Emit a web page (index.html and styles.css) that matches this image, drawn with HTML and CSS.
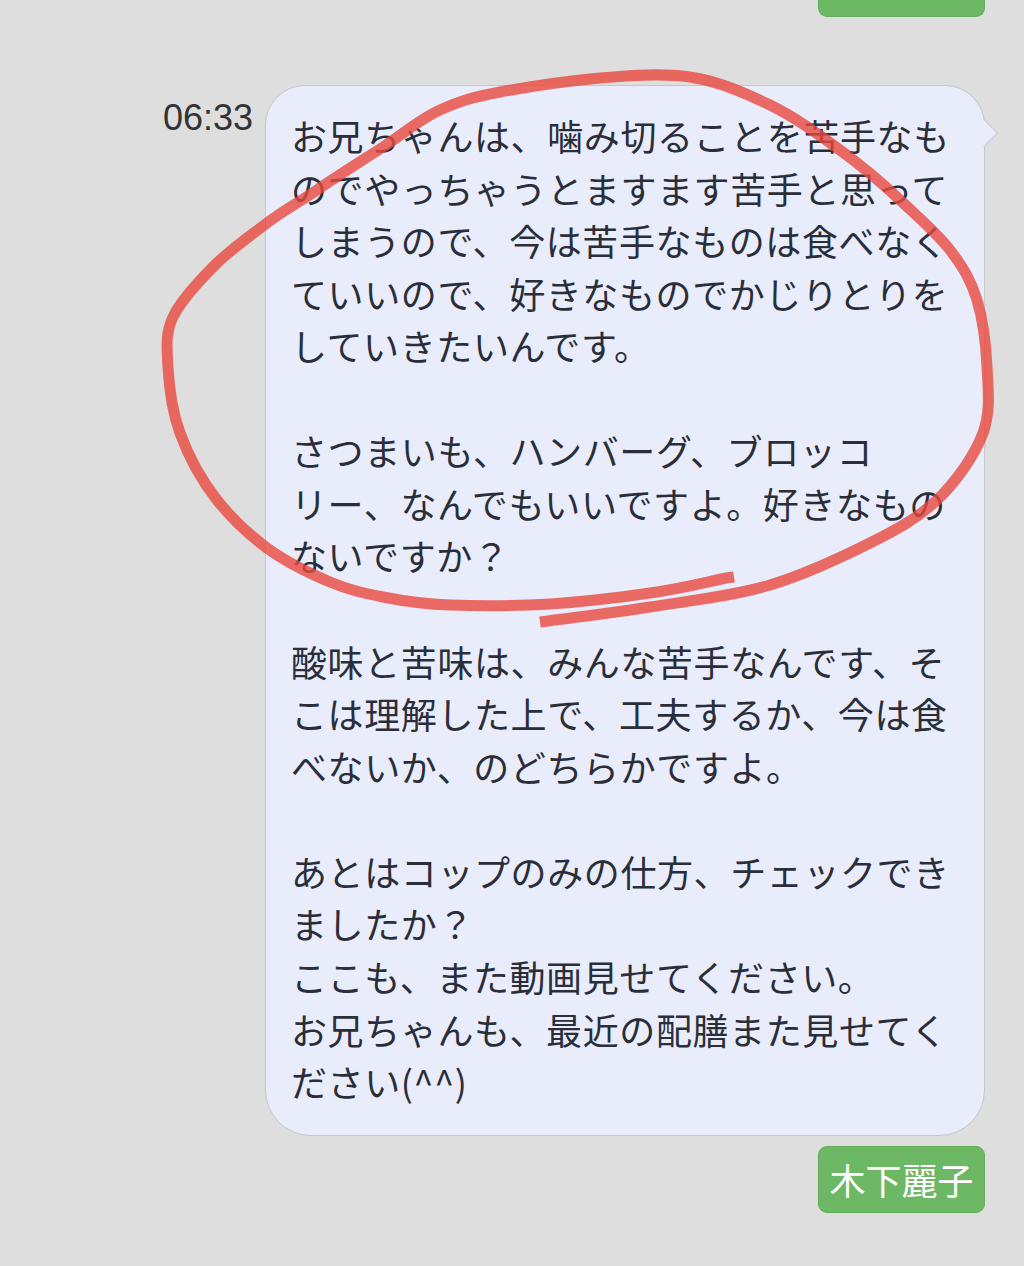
FILE: index.html
```html
<!DOCTYPE html>
<html lang="ja">
<head>
<meta charset="utf-8">
<title>chat</title>
<link rel="stylesheet" href="styles.css">
</head>
<body>
<div class="chat">
  <div class="tag tag-top"></div>
  <div class="msg">
    <div class="time">06:33</div>
    <div class="bubble">
      <p>お兄ちゃんは、噛み切ることを苦手なものでやっちゃうとますます苦手と思ってしまうので、今は苦手なものは食べなくていいので、好きなものでかじりとりをしていきたいんです。</p>
      <p>さつまいも、ハンバーグ、ブロッコリー、なんでもいいですよ。好きなものないですか？</p>
      <p>酸味と苦味は、みんな苦手なんです、そこは理解した上で、工夫するか、今は食べないか、のどちらかですよ。</p>
      <p>あとはコップのみの仕方、チェックできましたか？<br>ここも、また動画見せてください。<br>お兄ちゃんも、最近の配膳また見せてください(^^)</p>
    </div>
  </div>
  <div class="tag">木下麗子</div>
  <svg class="scribble" width="1024" height="1266" viewBox="0 0 1024 1266" aria-hidden="true">
    <path d="M540 622 C577 617 612 613 650 607 S733 596 770 585 S842 557 870 543 S918 518 937 500 S975 455 983 433 S988 389 987 367 S983 320 977 300 S963 267 950 250 S918 217 900 200 S862 166 840 150 S795 117 770 105 S718 81 690 77 S632 75 600 78 S527 87 500 92 S460 101 440 110 S403 134 383 147 S336 177 317 190 S284 210 267 223 S231 249 215 265 S181 300 173 317 S167 348 168 367 S172 411 180 433 S202 481 217 500 S248 534 267 548 S311 574 330 582 S363 593 383 597 S422 604 450 605 S517 606 550 604 S622 597 650 593 S703 583 717 580 S728 578 734 577"/>
  </svg>
</div>
</body>
</html>
```
FILE: styles.css
```css
html, body {
  margin: 0;
  padding: 0;
  background: #dedede;
}

.chat {
  position: relative;
  width: 1024px;
  height: 1266px;
  box-sizing: border-box;
  padding-right: 39px;
  display: flex;
  flex-direction: column;
  align-items: flex-end;
  overflow: hidden;
}

.tag {
  width: 167px;
  height: 67px;
  box-sizing: border-box;
  background: #6db864;
  border: 1px solid #63ad5b;
  border-radius: 9px;
  color: #ffffff;
  font-family: "Noto Sans CJK JP", "Noto Sans", sans-serif;
  font-size: 36px;
  display: flex;
  align-items: center;
  justify-content: center;
  margin-top: 10px;
}

.tag-top {
  height: 17px;
  margin-top: 0;
  border-top: none;
  border-radius: 0 0 9px 9px;
}

.msg {
  margin-top: 68px;
  display: flex;
  align-items: flex-start;
  gap: 12px;
}

.time {
  margin-top: 15px;
  font-family: "Liberation Sans", Arial, sans-serif;
  font-size: 36px;
  line-height: 36px;
  color: #333333;
}

.bubble {
  position: relative;
  width: 720px;
  box-sizing: border-box;
  padding: 23px 28px 27px 25px;
  background: #e9ecfb;
  border: 1px solid #c6c7cc;
  border-radius: 40px 40px 46px 46px;
  font-family: "Noto Sans CJK JP", "Noto Sans", sans-serif;
  font-size: 36px;
  letter-spacing: 0.6px;
  line-height: 52.56px;
  color: #2a2e39;
  line-break: strict;
}

.bubble::after {
  content: "";
  position: absolute;
  right: -10px;
  top: 37px;
  width: 20px;
  height: 20px;
  box-sizing: border-box;
  background: #e9ecfb;
  border-top: 1px solid #c6c7cc;
  border-right: 1px solid #c6c7cc;
  transform: rotate(45deg);
}

.bubble p {
  margin: 0 0 52.56px 0;
}

.bubble p:last-child {
  margin-bottom: 0;
}

.scribble {
  position: absolute;
  left: 0;
  top: 0;
  pointer-events: none;
}

.scribble path {
  fill: none;
  stroke: #e8483e;
  stroke-opacity: 0.8;
  stroke-width: 11px;
  stroke-linecap: butt;
  stroke-linejoin: round;
}
```
